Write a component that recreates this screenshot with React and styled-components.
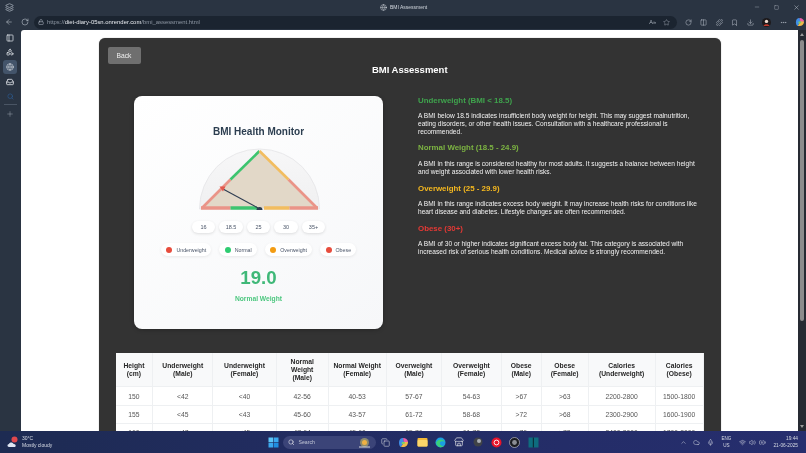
import React from 'react';
import styled, { createGlobalStyle } from 'styled-components';
import { PanelLeft, Shapes, Globe, Inbox, Search, Plus, ArrowLeft, RotateCw, Lock, Star, Minus, Square, X, Columns2, Puzzle, Bookmark, Download, MoreHorizontal, ChevronUp, Mic, Wifi, Volume2, BatteryCharging, Copy, Layers, Cloud, Store } from 'lucide-react';

const Global = createGlobalStyle`
  html, body { margin: 0; padding: 0; height: 453px; overflow: hidden; background: #2a3442; }
  * { box-sizing: border-box; }
  body { font-family: "Liberation Sans", Arial, sans-serif; }
`;

const Screen = styled.div`
  width: 806px; height: 453px; display: flex; flex-direction: column; overflow: hidden; filter: blur(.3px);
`;
const TitleBar = styled.div`
  height: 14px; flex: none; background: #2a3442; display: flex; align-items: center; position: relative; padding: 0 6px 0 5px; color: #c5ccd6;
`;
const TabTitle = styled.div`
  position: absolute; left: 380px; top: 0; height: 14px; display: flex; align-items: center; gap: 3px;
  font-size: 5px; color: #d3d8df;
`;
const WindowControls = styled.div`
  margin-left: auto; display: flex; gap: 14px; align-items: center;
`;
const Toolbar = styled.div`
  height: 16px; flex: none; background: #2a3442; display: flex; align-items: center; padding: 0 5px; color: #c5ccd6;
`;
const NavButtons = styled.div`
  display: flex; align-items: center; gap: 8px; width: 29px; flex: none;
`;
const AddressBar = styled.div`
  width: 643px; height: 13px; flex: none; background: #1b2430; border-radius: 7px; display: flex; align-items: center; padding: 0 4px; gap: 3px;
`;
const Url = styled.div`
  font-size: 5.9px; color: #8f98a4; white-space: nowrap;
  b { font-weight: 400; color: #e6e9ee; }
`;
const AddressIcons = styled.div`
  margin-left: auto; display: flex; gap: 7px; align-items: center; padding-right: 3px; color: #aab2bd;
`;
const ReadAloud = styled.span`
  font-size: 5.5px;
`;
const ToolIcons = styled.div`
  margin-left: 7.5px; display: flex; align-items: center; gap: 8.5px; color: #c5ccd6;
`;
const Body = styled.div`
  flex: 1; min-height: 0; display: flex; background: #2a3442;
`;
const Sidebar = styled.div`
  width: 21px; flex: none; display: flex; flex-direction: column; align-items: center; padding: .5px 1px 0 0; color: #e4e8ed;
`;
const SideItem = styled.div`
  width: 14px; height: 14px; margin-bottom: .7px; display: flex; align-items: center; justify-content: center; border-radius: 3px;
  background: ${p => (p.$active ? '#43546a' : 'transparent')};
  color: ${p => p.$color || 'inherit'};
`;
const SideRule = styled.div`
  width: 13px; height: 1px; background: #4a5564; margin: 0 0 2.5px;
`;
const Viewport = styled.main`
  flex: 1; min-width: 0; background: #fff; border-top-left-radius: 3px; overflow: hidden; padding-top: 8px;
`;
const Scrollbar = styled.div`
  width: 8px; flex: none; background: #262a32; display: flex; flex-direction: column; align-items: center; padding-top: 3px;
`;
const ScrollArrow = styled.div`
  width: 0; height: 0; border-left: 2px solid transparent; border-right: 2px solid transparent;
  ${p => (p.$down ? 'border-top: 3px solid #9a9a9a; margin-top: auto; margin-bottom: 3px;' : 'border-bottom: 3px solid #9a9a9a;')}
`;
const ScrollThumb = styled.div`
  width: 4px; height: 281px; background: #8c8c8c; border-radius: 2px; margin-top: 4px;
`;
const Panel = styled.div`
  width: 621.5px; margin: 0 0 0 78px; background: #333; border-radius: 6px; padding: 8.7px 8.5px 20px;
  box-shadow: 0 0 1px rgba(0,0,0,.5); color: #fff;
`;
const BackButton = styled.button`
  display: block; width: 33px; height: 17px; border: 0; border-radius: 2px; background: #6f6f6f; color: #f0f0f0;
  font: 6.7px "Liberation Sans", Arial, sans-serif; padding: 0;
`;
const PageTitle = styled.h1`
  margin: -.5px 0 0; height: 13px; line-height: 13px; text-align: center; font-size: 9.5px; font-weight: 700; color: #fff;
`;
const Columns = styled.div`
  display: flex; gap: 35px; padding-left: 26.5px; margin-top: 20px; align-items: flex-start;
`;
const Card = styled.section`
  width: 249px; height: 233px; flex: none; border-radius: 8px; background: linear-gradient(145deg, #ffffff, #f6f7f9);
  display: flex; flex-direction: column; align-items: center; padding-top: 30px;
  box-shadow: 0 1px 4px rgba(0,0,0,.25);
`;
const CardTitle = styled.h2`
  margin: 0; height: 12px; line-height: 12px; font-size: 10px; font-weight: 700; color: #2c3e50;
`;
const GaugeSvg = styled.svg`
  display: block; margin-top: 9.5px; flex: none;
`;
const ScaleRow = styled.div`
  display: flex; gap: 4px; margin-top: 10.2px;
`;
const ScalePill = styled.div`
  width: 23.5px; height: 12px; border-radius: 6px; background: #fff; box-shadow: 0 1px 3px rgba(0,0,0,.12);
  font-size: 5.5px; color: #4a5568; display: flex; align-items: center; justify-content: center;
`;
const LegendRow = styled.div`
  display: flex; gap: 8px; margin-top: 10.3px;
`;
const LegendItem = styled.div`
  height: 13px; border-radius: 7px; background: #fff; box-shadow: 0 1px 3px rgba(0,0,0,.08);
  padding: 0 5px 0 5.5px; display: flex; align-items: center; gap: 4px; font-size: 5.3px; color: #4a5568; white-space: nowrap;
`;
const Dot = styled.span`
  width: 6px; height: 6px; border-radius: 50%; background: ${p => p.$color};
`;
const Value = styled.div`
  margin-top: 11px; font-size: 18.7px; line-height: 22px; font-weight: 700; color: #3fb878;
`;
const ValueLabel = styled.div`
  margin-top: 5.5px; font-size: 6.7px; line-height: 8px; font-weight: 700; color: #4cc77f;
`;
const Info = styled.div`
  flex: 1; min-width: 0; padding-right: 8px; margin-top: -.5px;
`;
const InfoHeading = styled.h3`
  margin: 0; height: 9px; line-height: 9px; font-size: 7.9px; font-weight: 700; color: ${p => p.$color};
`;
const InfoText = styled.p`
  margin: 7.7px 0 8.1px; font-size: 6.6px; line-height: 7.65px; color: #f2f2f2;
`;
const TableWrap = styled.div`
  margin: 24.3px 0 0 8px;
`;
const Table = styled.table`
  width: 588px; table-layout: fixed; border-collapse: collapse; background: #fff;
`;
const Col = styled.col`
  width: ${p => p.$w}px;
`;
const Th = styled.th`
  height: 33.5px; padding: 0 1px; background: #f8f9fa; border: 1px solid #eef0f2; border-width: 0 1px 1px 0;
  font-size: 6.75px; line-height: 7.7px; font-weight: 700; color: #262626; text-align: center;
`;
const Td = styled.td`
  height: 18.3px; padding: 0; border: 1px solid #eef0f2; border-width: 0 1px 1px 0;
  font-size: 6.75px; color: #555; text-align: center;
`;
const Taskbar = styled.footer`
  height: 22px; flex: none; background: linear-gradient(90deg, #1d2b52 0%, #222c62 40%, #262e6e 100%); display: flex; align-items: center;
  padding: 0 8px 0 7px; position: relative; color: #dfe3ea;
`;
const Weather = styled.div`
  display: flex; align-items: center; gap: 3px; width: 261px;
`;
const WeatherText = styled.div`
  font-size: 5px; line-height: 7px; color: #d9dde6;
  span { display: block; }
`;
const SearchBox = styled.div`
  width: 93px; height: 13px; border-radius: 7px; background: #3b4478; margin-left: 4px; display: flex; align-items: center; padding: 0 5px; gap: 4px;
  font-size: 5.2px; color: #c1c6d6;
`;
const SearchArt = styled.svg`
  margin-left: auto;
`;
const TaskIcons = styled.div`
  display: flex; align-items: center; gap: 7.5px; margin-left: 3.5px;
`;
const TaskIcon = styled.div`
  width: 11px; height: 11px; display: flex; align-items: center; justify-content: center;
`;
const Tray = styled.div`
  margin-left: auto; display: flex; align-items: center; gap: 6.5px; color: #d7dbe4;
`;
const TrayGroup = styled.div`
  display: flex; align-items: center; gap: 3px;
`;
const Lang = styled.div`
  font-size: 4.6px; line-height: 7px; text-align: center; width: 12px;
`;
const Clock = styled.div`
  font-size: 4.8px; line-height: 7px; text-align: right; margin-left: 1px;
`;

const sizes = [37.3, 60, 63.4, 52, 58, 55.6, 59.4, 40, 47, 67, 47.7];
const heads = [
  ['Height', '(cm)'], ['Underweight', '(Male)'], ['Underweight', '(Female)'], ['Normal', 'Weight', '(Male)'], ['Normal Weight', '(Female)'],
  ['Overweight', '(Male)'], ['Overweight', '(Female)'], ['Obese', '(Male)'], ['Obese', '(Female)'], ['Calories', '(Underweight)'], ['Calories', '(Obese)'],
];
const rows = [
  ['150', '<42', '<40', '42-56', '40-53', '57-67', '54-63', '>67', '>63', '2200-2800', '1500-1800'],
  ['155', '<45', '<43', '45-60', '43-57', '61-72', '58-68', '>72', '>68', '2300-2900', '1600-1900'],
  ['160', '<47', '<45', '47-64', '45-60', '65-76', '61-72', '>76', '>72', '2400-3000', '1700-2000'],
];
const info = [
  ['#3fa34d', 'Underweight (BMI < 18.5)', 'A BMI below 18.5 indicates insufficient body weight for height. This may suggest malnutrition, eating disorders, or other health issues. Consultation with a healthcare professional is recommended.'],
  ['#7cb342', 'Normal Weight (18.5 - 24.9)', 'A BMI in this range is considered healthy for most adults. It suggests a balance between height and weight associated with lower health risks.'],
  ['#f5b81f', 'Overweight (25 - 29.9)', 'A BMI in this range indicates excess body weight. It may increase health risks for conditions like heart disease and diabetes. Lifestyle changes are often recommended.'],
  ['#e53935', 'Obese (30+)', 'A BMI of 30 or higher indicates significant excess body fat. This category is associated with increased risk of serious health conditions. Medical advice is strongly recommended.'],
];
const legend = [['#e74c3c', 'Underweight'], ['#2ecc71', 'Normal'], ['#f39c12', 'Overweight'], ['#e74c3c', 'Obese']];

function Gauge() {
  return (
    <GaugeSvg width="122" height="63" viewBox="0 0 122 63">
      <defs>
        <linearGradient id="dome" x1="0" y1="0" x2="0" y2="1">
          <stop offset="0" stopColor="#f7f7f8" />
          <stop offset="1" stopColor="#f0f0f1" />
        </linearGradient>
      </defs>
      <path d="M1.5 61 A60 60 0 0 1 121.5 61 Z" fill="url(#dome)" stroke="#e4e5e7" strokeWidth=".8" />
      <polygon points="4,60 61.5,3 119,60" fill="#e2d8c8" />
      <g strokeWidth="3.4" fill="none">
        <line x1="3" y1="60" x2="32.5" y2="60" stroke="#ea9488" />
        <line x1="32.5" y1="60" x2="59" y2="60" stroke="#3cc46f" />
        <line x1="66" y1="60" x2="91.5" y2="60" stroke="#f2bd60" />
        <line x1="91.5" y1="60" x2="120" y2="60" stroke="#ea9488" />
      </g>
      <g strokeWidth="2.6" fill="none">
        <line x1="4" y1="60" x2="32.5" y2="31.5" stroke="#ea9488" />
        <line x1="32.5" y1="31.5" x2="61.5" y2="3" stroke="#3cc46f" />
        <line x1="61.5" y1="3" x2="90.5" y2="31.5" stroke="#f2bd60" />
        <line x1="90.5" y1="31.5" x2="119" y2="60" stroke="#ea9488" />
      </g>
      <line x1="60" y1="60" x2="25" y2="41" stroke="#2f3e52" strokeWidth="1.1" />
      <polygon points="21.5,38.5 27.5,38.5 25,43.5" fill="#e2574c" />
      <path d="M58.5 62 A3 3 0 0 1 64.5 62 Z" fill="#2c3e50" />
    </GaugeSvg>
  );
}

function EdgeIcon() {
  return (
    <svg width="11" height="11" viewBox="0 0 11 11">
      <circle cx="5.5" cy="5.5" r="5" fill="#1b9de2" />
      <path d="M1 6 C2 2 8 1 10 5 C8 3.5 4 4 5 7 C5.5 9 8 9.5 9.5 8.5 C7 11.5 2 10.5 1 6Z" fill="#3bd07a" />
    </svg>
  );
}
function CopilotIcon({ size = 11 }) {
  return (
    <svg width={size} height={size} viewBox="0 0 11 11">
      <path d="M1 6 C1 2 3 1 5 1 L6 5 L3 10 C2 10 1 8 1 6Z" fill="#3f8ee8" />
      <path d="M5 1 C8 1 10 3 10 5 L6 6Z" fill="#e85fa8" />
      <path d="M10 5 C10 8 8 10 5 10 L3 10 L6 5Z" fill="#f0b94a" />
      <path d="M4 5 L7 5 L6.5 7 L3.5 7Z" fill="#7ad06a" />
    </svg>
  );
}
function WinLogo() {
  return (
    <svg width="11" height="11" viewBox="0 0 11 11">
      <rect x=".5" y=".5" width="4.7" height="4.7" fill="#5cc4f5" />
      <rect x="5.8" y=".5" width="4.7" height="4.7" fill="#3aa8ee" />
      <rect x=".5" y="5.8" width="4.7" height="4.7" fill="#3aa8ee" />
      <rect x="5.8" y="5.8" width="4.7" height="4.7" fill="#1f8de0" />
    </svg>
  );
}

export default function App() {
  return (
    <Screen>
      <Global />
      <TitleBar>
        <Layers size={9} strokeWidth={1.6} />
        <TabTitle><Globe size={7} strokeWidth={1.6} />BMI Assessment</TabTitle>
        <WindowControls>
          <Minus size={6} strokeWidth={1.4} />
          <Square size={5} strokeWidth={1.6} />
          <X size={7} strokeWidth={1.6} />
        </WindowControls>
      </TitleBar>
      <Toolbar>
        <NavButtons>
          <ArrowLeft size={8} strokeWidth={1.6} />
          <RotateCw size={8} strokeWidth={1.6} />
        </NavButtons>
        <AddressBar>
          <Lock size={6} strokeWidth={1.8} />
          <Url>https://<b>diet-diary-05sn.onrender.com</b>/bmi_assessment.html</Url>
          <AddressIcons>
            <ReadAloud>A»</ReadAloud>
            <Star size={7} strokeWidth={1.5} />
          </AddressIcons>
        </AddressBar>
        <ToolIcons>
          <RotateCw size={7} strokeWidth={1.6} />
          <Columns2 size={7} strokeWidth={1.6} />
          <Puzzle size={7} strokeWidth={1.6} />
          <Bookmark size={7} strokeWidth={1.6} />
          <Download size={7} strokeWidth={1.6} />
          <svg width="9" height="9" viewBox="0 0 9 9"><circle cx="4.5" cy="4.5" r="4.5" fill="#1d1a1c" /><circle cx="4.5" cy="3.4" r="1.7" fill="#f0dcd0" /><path d="M1.5 8 C2 5.6 7 5.6 7.5 8Z" fill="#c0392b" /></svg>
          <MoreHorizontal size={7} strokeWidth={1.6} />
          <CopilotIcon size={10} />
        </ToolIcons>
      </Toolbar>
      <Body>
        <Sidebar>
          <SideItem><PanelLeft size={8} strokeWidth={2.2} /></SideItem>
          <SideItem><Shapes size={8} strokeWidth={2.2} /></SideItem>
          <SideItem $active><Globe size={8} strokeWidth={1.6} /></SideItem>
          <SideItem><Inbox size={8} strokeWidth={2.4} /></SideItem>
          <SideItem $color="#2c5f99"><Search size={7} strokeWidth={2} /></SideItem>
          <SideRule />
          <SideItem $color="#98a2af"><Plus size={8} strokeWidth={1.5} /></SideItem>
        </Sidebar>
        <Viewport>
          <Panel>
            <BackButton>Back</BackButton>
            <PageTitle>BMI Assessment</PageTitle>
            <Columns>
              <Card>
                <CardTitle>BMI Health Monitor</CardTitle>
                <Gauge />
                <ScaleRow>
                  {['16', '18.5', '25', '30', '35+'].map(s => <ScalePill key={s}>{s}</ScalePill>)}
                </ScaleRow>
                <LegendRow>
                  {legend.map(([c, t]) => <LegendItem key={t}><Dot $color={c} />{t}</LegendItem>)}
                </LegendRow>
                <Value>19.0</Value>
                <ValueLabel>Normal Weight</ValueLabel>
              </Card>
              <Info>
                {info.map(([c, h, t]) => (
                  <React.Fragment key={h}>
                    <InfoHeading $color={c}>{h}</InfoHeading>
                    <InfoText>{t}</InfoText>
                  </React.Fragment>
                ))}
              </Info>
            </Columns>
            <TableWrap>
              <Table>
                <colgroup>{sizes.map((w, i) => <Col key={i} $w={w} />)}</colgroup>
                <thead>
                  <tr>{heads.map((h, i) => <Th key={i}>{h.map((l, j) => <React.Fragment key={j}>{j > 0 && <br />}{l}</React.Fragment>)}</Th>)}</tr>
                </thead>
                <tbody>
                  {rows.map(r => <tr key={r[0]}>{r.map((c, i) => <Td key={i}>{c}</Td>)}</tr>)}
                </tbody>
              </Table>
            </TableWrap>
          </Panel>
        </Viewport>
        <Scrollbar>
          <ScrollArrow />
          <ScrollThumb />
          <ScrollArrow $down />
        </Scrollbar>
      </Body>
      <Taskbar>
        <Weather>
          <svg width="12" height="12" viewBox="0 0 12 12"><circle cx="7.5" cy="3.5" r="3" fill="#e0484d" /><path d="M2 11 C0 11 0 8 2 8 C2.5 6 6 6 6.5 8 C9 7.5 9.5 11 7.5 11Z" fill="#dfe6f3" /></svg>
          <WeatherText><span>30°C</span><span>Mostly cloudy</span></WeatherText>
        </Weather>
        <WinLogo />
        <SearchBox>
          <Search size={6.5} strokeWidth={2} color="#fff" />
          Search
          <SearchArt width="13" height="11" viewBox="0 0 13 11"><circle cx="6.5" cy="5.5" r="4.5" fill="#8d8a6a" /><circle cx="6.5" cy="5.5" r="2.5" fill="#efb144" /><path d="M1 10 H12" stroke="#d9d9d9" strokeWidth="1" /></SearchArt>
        </SearchBox>
        <TaskIcons>
          <TaskIcon><Copy size={9} strokeWidth={1.6} color="#cfd3dc" /></TaskIcon>
          <TaskIcon><CopilotIcon /></TaskIcon>
          <TaskIcon><svg width="11" height="10" viewBox="0 0 11 10"><rect x=".5" y="1" width="10" height="8.5" rx="1" fill="#f3b937" /><rect x=".5" y="3" width="10" height="6.5" rx="1" fill="#fcd56a" /></svg></TaskIcon>
          <TaskIcon><EdgeIcon /></TaskIcon>
          <TaskIcon><Store size={10} strokeWidth={1.6} color="#f1f1f1" /></TaskIcon>
          <TaskIcon><svg width="10" height="10" viewBox="0 0 10 10"><circle cx="5" cy="5" r="4.5" fill="#3f4247" /><circle cx="6" cy="4" r="2" fill="#a9adb3" /></svg></TaskIcon>
          <TaskIcon><svg width="11" height="11" viewBox="0 0 11 11"><circle cx="5.5" cy="5.5" r="5" fill="#e8142a" /><circle cx="5.5" cy="5.5" r="2.4" fill="none" stroke="#fff" strokeWidth=".9" /></svg></TaskIcon>
          <TaskIcon><svg width="11" height="11" viewBox="0 0 11 11"><circle cx="5.5" cy="5.5" r="5" fill="#191b20" stroke="#d7d7d7" strokeWidth=".6" /><circle cx="5.5" cy="5.5" r="2.4" fill="#8b8e94" /></svg></TaskIcon>
          <TaskIcon><svg width="11" height="11" viewBox="0 0 11 11"><rect x=".5" y=".5" width="10" height="10" fill="#0e6d7e" /><rect x="4.8" y=".5" width="1.2" height="10" fill="#0a2f3c" /></svg></TaskIcon>
        </TaskIcons>
        <Tray>
          <ChevronUp size={7} strokeWidth={1.6} />
          <Cloud size={7} strokeWidth={1.6} />
          <Mic size={7} strokeWidth={1.6} />
          <Lang>ENG<br />US</Lang>
          <TrayGroup>
            <Wifi size={7} strokeWidth={1.8} />
            <Volume2 size={7} strokeWidth={1.6} />
            <BatteryCharging size={7} strokeWidth={1.8} />
          </TrayGroup>
          <Clock>19:44<br />21-06-2025</Clock>
        </Tray>
      </Taskbar>
    </Screen>
  );
}
